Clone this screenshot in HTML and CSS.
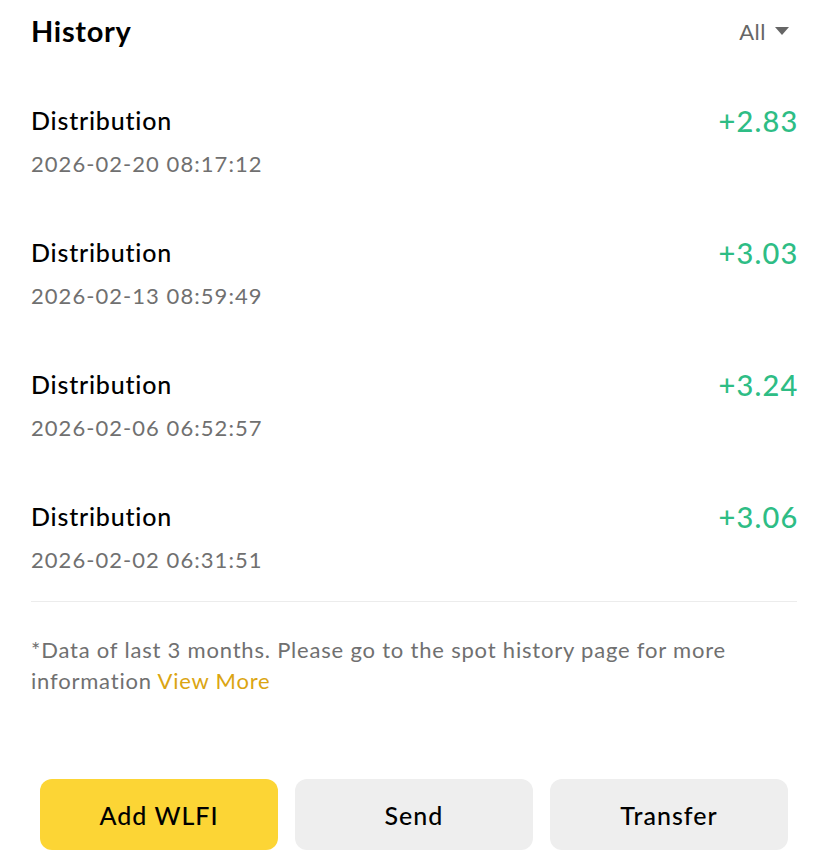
FILE: index.html
```html
<!DOCTYPE html>
<html lang="en">
<head>
<meta charset="utf-8">
<title>History</title>
<link rel="stylesheet" href="styles.css">
</head>
<body>
<div class="page">
  <header class="header">
    <h1 class="title">History</h1>
    <div class="filter">All <svg class="caret" width="14" height="9" viewBox="0 0 14 9"><path d="M0 0h14L7 8z" fill="#666"/></svg></div>
  </header>
  <ul class="list">
    <li class="row">
      <div class="row-main"><span class="name">Distribution</span><span class="amount">+2.83</span></div>
      <div class="date">2026-02-20 08:17:12</div>
    </li>
    <li class="row">
      <div class="row-main"><span class="name">Distribution</span><span class="amount">+3.03</span></div>
      <div class="date">2026-02-13 08:59:49</div>
    </li>
    <li class="row">
      <div class="row-main"><span class="name">Distribution</span><span class="amount">+3.24</span></div>
      <div class="date">2026-02-06 06:52:57</div>
    </li>
    <li class="row">
      <div class="row-main"><span class="name">Distribution</span><span class="amount">+3.06</span></div>
      <div class="date">2026-02-02 06:31:51</div>
    </li>
  </ul>
  <div class="divider"></div>
  <p class="note">*Data of last 3 months. Please go to the spot history page for more information <a class="more" href="#">View More</a></p>
</div>
<div class="actions">
  <button class="btn btn-primary">Add WLFI</button>
  <button class="btn">Send</button>
  <button class="btn">Transfer</button>
</div>
</body>
</html>
```

FILE: styles.css
```css
* { box-sizing: border-box; }
html, body { margin: 0; padding: 0; background: #fff; }
body {
  font-family: Lato, "Liberation Sans", sans-serif;
  color: #000;
  width: 828px;
  height: 863px;
  overflow: hidden;
}
.page { padding: 0 31px; }
.header {
  height: 62px;
  display: flex;
  align-items: center;
  justify-content: space-between;
}
.title {
  margin: 0;
  font-size: 29px;
  font-weight: 700;
  line-height: 34px;
  letter-spacing: 0.7px;
}
.filter {
  display: flex;
  align-items: center;
  gap: 9px;
  font-size: 22px;
  letter-spacing: 0.5px;
  color: #666;
  padding-right: 8px;
}
.list {
  list-style: none;
  margin: 0;
  padding: 41px 0 0;
  display: flex;
  flex-direction: column;
  gap: 56px;
}
.row { display: flex; flex-direction: column; gap: 12px; }
.row-main {
  display: flex;
  justify-content: space-between;
  align-items: center;
  height: 34px;
}
.name { font-size: 25px; font-weight: 500; letter-spacing: 0.8px; }
.amount { font-size: 29px; font-weight: 500; letter-spacing: 1.2px; margin-right: -1.5px; color: #2ebd85; }
.date { font-size: 22px; line-height: 30px; letter-spacing: 1.05px; color: #707070; }
.divider { height: 1px; background: #ececec; margin-top: 26px; }
.note {
  margin: 32px 0 0;
  font-size: 22px;
  line-height: 31px;
  letter-spacing: 0.8px;
  color: #707070;
}
.more { color: #dba512; text-decoration: none; }
.actions {
  display: flex;
  gap: 17px;
  padding: 0 40px;
  margin-top: 83px;
}
.btn {
  flex: 1;
  height: 71px;
  border: none;
  border-radius: 12px;
  background: #eeeeee;
  font-family: inherit;
  font-size: 25px;
  font-weight: 500;
  letter-spacing: 1px;
  color: #000;
}
.btn-primary { background: #fcd535; }
```
